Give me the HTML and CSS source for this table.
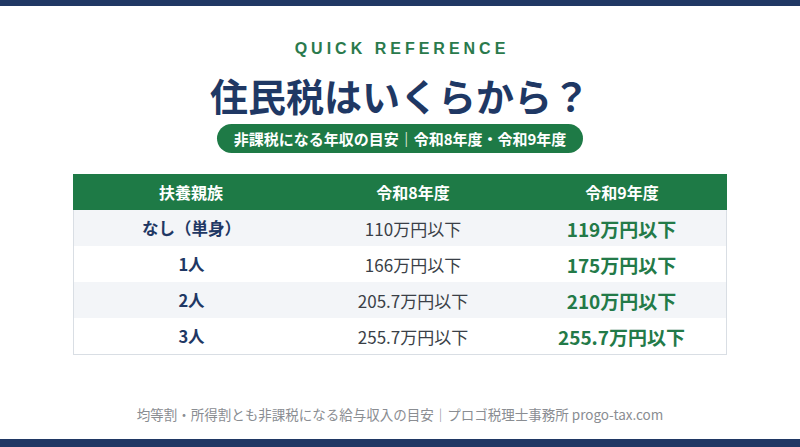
FILE: index.html
```html
<!DOCTYPE html>
<html lang="ja">
<head>
<meta charset="utf-8">
<link rel="stylesheet" href="styles.css">
</head>
<body>
<div class="page">
  <div class="topbar"></div>
  <main class="content">
    <div class="eyebrow">QUICK REFERENCE</div>
    <h1 class="title">住民税はいくらから？</h1>
    <div class="pill">非課税になる年収の目安｜令和8年度・令和9年度</div>
    <div class="table">
      <div class="row head">
        <div class="cell">扶養親族</div>
        <div class="cell">令和8年度</div>
        <div class="cell">令和9年度</div>
      </div>
      <div class="row alt">
        <div class="cell c1">なし（単身）</div>
        <div class="cell c2">110万円以下</div>
        <div class="cell c3">119万円以下</div>
      </div>
      <div class="row">
        <div class="cell c1">1人</div>
        <div class="cell c2">166万円以下</div>
        <div class="cell c3">175万円以下</div>
      </div>
      <div class="row alt">
        <div class="cell c1">2人</div>
        <div class="cell c2">205.7万円以下</div>
        <div class="cell c3">210万円以下</div>
      </div>
      <div class="row">
        <div class="cell c1">3人</div>
        <div class="cell c2">255.7万円以下</div>
        <div class="cell c3">255.7万円以下</div>
      </div>
    </div>
    <div class="footnote">均等割・所得割とも非課税になる給与収入の目安｜プロゴ税理士事務所 progo-tax.com</div>
  </main>
  <div class="bottombar"></div>
</div>
</body>
</html>
```
FILE: styles.css
```css
html, body {
  margin: 0;
  padding: 0;
  background: #ffffff;
}
body {
  font-family: "Noto Sans CJK JP", "Noto Sans", sans-serif;
}
.page {
  width: 800px;
  height: 447px;
  display: flex;
  flex-direction: column;
  overflow: hidden;
}
.topbar {
  height: 6px;
  background: #203864;
  flex: none;
}
.bottombar {
  height: 8px;
  background: #203864;
  flex: none;
  margin-top: auto;
}
.content {
  display: flex;
  flex-direction: column;
  align-items: center;
}
.eyebrow {
  margin-top: 33px;
  font-family: "Liberation Sans", "Noto Sans", sans-serif;
  font-size: 16px;
  font-weight: 700;
  letter-spacing: 4px;
  color: #2a7a4c;
  line-height: 20px;
  padding-left: 4px;
}
.title {
  margin: 12px 0 0;
  font-size: 38px;
  font-weight: 700;
  color: #1f3864;
  line-height: 48px;
  letter-spacing: 0;
}
.pill {
  margin-top: 5px;
  width: 366px;
  height: 29px;
  box-sizing: border-box;
  border-radius: 15px;
  background: #1e7a46;
  color: #ffffff;
  font-size: 15px;
  font-weight: 700;
  display: flex;
  align-items: center;
  justify-content: center;
}
.table {
  margin-top: 21px;
  width: 654px;
  box-sizing: border-box;
  border: 1px solid #d9dee4;
  border-top: none;
}
.row {
  display: grid;
  grid-template-columns: 235px 208px 1fr;
  height: 36px;
  align-items: center;
}
.row.head {
  background: #1e7a46;
  height: 36px;
  margin: 0 -1px;
  grid-template-columns: 236px 208px 1fr;
}
.row.alt {
  background: #f3f5f8;
}
.cell {
  text-align: center;
  font-size: 17px;
  color: #3a3f47;
}
.head .cell {
  color: #ffffff;
  font-weight: 700;
  font-size: 16px;
}
.c1 {
  font-weight: 700;
  color: #1f3864;
  font-size: 16.5px;
}
.c3 {
  font-weight: 700;
  color: #237a48;
  font-size: 19px;
}
.footnote {
  margin-top: 49px;
  font-size: 13.5px;
  color: #8a8d92;
}
```
